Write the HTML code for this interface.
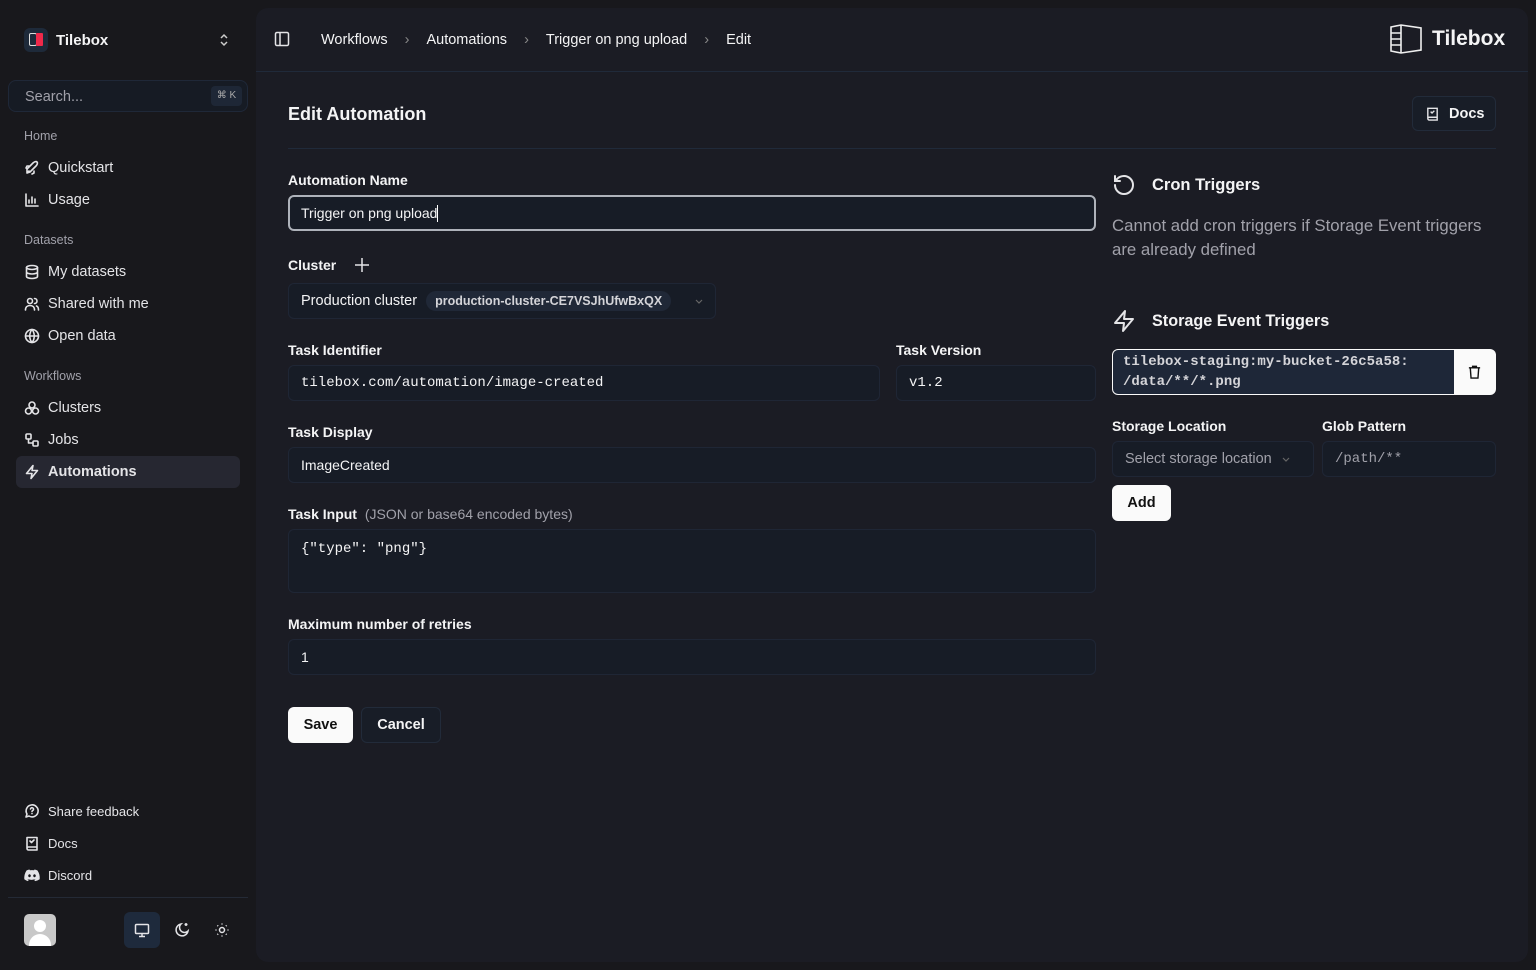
<!DOCTYPE html>
<html><head><meta charset="utf-8"><style>
*{box-sizing:border-box;margin:0;padding:0}
body{width:1536px;height:970px;background:#18181c;font-family:"Liberation Sans",sans-serif;color:#f4f4f5;position:relative;overflow:hidden;font-size:14px}
.abs{position:absolute}
.nav{position:absolute;left:24px;display:flex;align-items:center;gap:8px;font-size:14.5px;color:#e4e4e7}
.nav svg{width:16px;height:16px;stroke:#e4e4e7;fill:none;stroke-width:1.6;stroke-linecap:round;stroke-linejoin:round}
.sec{position:absolute;left:24px;font-size:12.5px;color:#a1a1aa}
.main{position:absolute;left:256px;top:8px;width:1272px;height:954px;background:#1b1c24;border-radius:12px}
.lbl{position:absolute;font-size:14px;font-weight:bold;color:#f4f4f5}
.inp{position:absolute;background:#171c26;border:1px solid #1f2635;border-radius:6px;padding-left:12px;display:flex;align-items:center;font-size:14px;color:#f4f4f5}
.mono{font-family:"Liberation Mono",monospace}
.btn{position:absolute;border-radius:6px;display:flex;align-items:center;justify-content:center;font-size:14.5px;font-weight:bold}
</style></head><body>
<div class="abs" style="left:24px;top:28px;width:24px;height:24px;background:#1e2a3a;border-radius:6px"></div>
<div class="abs" style="left:29px;top:33px;width:8px;height:13px;border:1.5px solid #ddd;border-radius:2px"></div>
<div class="abs" style="left:36px;top:33px;width:7px;height:13px;background:#f0294a;border-radius:1px"></div>
<div class="abs" style="left:56px;top:32px;font-size:15px;font-weight:bold">Tilebox</div>
<svg class="abs" style="left:216px;top:32px" width="16" height="16" viewBox="0 0 16 16" fill="none" stroke="#ccc" stroke-width="1.5"><path d="M5 6l3-3 3 3M5 10l3 3 3-3"/></svg>
<div class="abs" style="left:8px;top:80px;width:240px;height:32px;border:1px solid #1f2838;background:#161b24;border-radius:8px"></div>
<div class="abs" style="left:25px;top:89px;font-size:14.5px;color:#a1a1aa">Search...</div>
<div class="abs" style="left:211px;top:86px;width:31px;height:20px;background:#1e2736;border-radius:4px;font-size:10px;color:#aaa;text-align:center;line-height:20px">⌘ K</div>
<div class="sec" style="top:129px">Home</div>
<div class="nav" style="top:160px"><svg viewBox="0 0 16 16"><path d="M3 13l3-1 6-6c1-1 2-3 1-4-1-1-3 0-4 1L3 9zM3 13l2-2M5 6H3l-1 2M10 11v2l-2 1"/></svg>Quickstart</div>
<div class="nav" style="top:192px"><svg viewBox="0 0 16 16"><path d="M2 2v12h12M5 11V8M8 11V5M11 11V7"/></svg>Usage</div>
<div class="sec" style="top:233px">Datasets</div>
<div class="nav" style="top:264px"><svg viewBox="0 0 16 16"><ellipse cx="8" cy="3.5" rx="5.5" ry="2"/><path d="M2.5 3.5v9c0 1 2.5 2 5.5 2s5.5-1 5.5-2v-9M2.5 8c0 1 2.5 2 5.5 2s5.5-1 5.5-2"/></svg>My datasets</div>
<div class="nav" style="top:296px"><svg viewBox="0 0 16 16"><circle cx="6" cy="5" r="2.5"/><path d="M1.5 14c0-3 2-4.5 4.5-4.5s4.5 1.5 4.5 4.5M10.5 2.5a2.5 2.5 0 010 5M12.5 10c1.5.5 2 2 2 4"/></svg>Shared with me</div>
<div class="nav" style="top:328px"><svg viewBox="0 0 16 16"><circle cx="8" cy="8" r="6.5"/><path d="M1.5 8h13M8 1.5c-3 3.5-3 9.5 0 13M8 1.5c3 3.5 3 9.5 0 13"/></svg>Open data</div>
<div class="sec" style="top:369px">Workflows</div>
<div class="nav" style="top:400px"><svg viewBox="0 0 16 16"><circle cx="8" cy="5" r="3"/><circle cx="4.5" cy="11" r="3"/><circle cx="11.5" cy="11" r="3"/></svg>Clusters</div>
<div class="nav" style="top:432px"><svg viewBox="0 0 16 16"><rect x="2" y="2" width="5" height="5" rx="1"/><rect x="9" y="9" width="5" height="5" rx="1"/><path d="M4.5 7v4h4.5"/></svg>Jobs</div>
<div class="abs" style="left:16px;top:456px;width:224px;height:32px;background:#262731;border-radius:6px"></div>
<div class="nav" style="top:464px;font-weight:bold"><svg viewBox="0 0 16 16"><path d="M9 1.5L2.5 9.5H8l-1 5 6.5-8H8z"/></svg>Automations</div>
<div class="nav" style="top:803px;font-size:13px"><svg viewBox="0 0 16 16"><path d="M2 14l1-3a6 6 0 112 2z"/><path d="M6.5 6a1.5 1.5 0 113 .5c0 1-1.5 1-1.5 2M8 10.5v.1"/></svg>Share feedback</div>
<div class="nav" style="top:835px;font-size:13px"><svg viewBox="0 0 16 16"><path d="M3 13V2.5h10V12H4.5A1.5 1.5 0 003 13.5 1.5 1.5 0 004.5 15H13v-3M6 6l1.5 1.5L10 5"/></svg>Docs</div>
<div class="nav" style="top:867px;font-size:13px"><svg viewBox="0 0 16 16" style="fill:#e4e4e7;stroke:none"><path d="M13.5 3.5A12 12 0 0010.5 2.5l-.4.8a11 11 0 00-4.2 0l-.4-.8a12 12 0 00-3 1C.6 6.500 .1 9.400.3 12.200a12 12 0 003.7 1.900l.8-1.300-1.300-.6.3-.2a8.500 8.500 0 007.400 0l.3.2-1.300.6.8 1.300A12 12 0 0015.700 12.200c.3-3.300-.5-6.200-2.200-8.700zM5.500 10.300c-.7 0-1.300-.7-1.300-1.500s.6-1.500 1.300-1.500 1.300.7 1.300 1.500-.6 1.500-1.300 1.500zm5 0c-.7 0-1.300-.7-1.300-1.500s.6-1.500 1.300-1.500 1.300.7 1.300 1.500-.6 1.500-1.300 1.500z"/></svg>Discord</div>
<div class="abs" style="left:8px;top:897px;width:240px;height:1px;background:#242a36"></div>
<div class="abs" style="left:24px;top:914px;width:32px;height:32px;background:#c8c8c8;border-radius:5px;overflow:hidden"><div class="abs" style="left:10px;top:6px;width:12px;height:12px;border-radius:50%;background:#fff"></div><div class="abs" style="left:5px;top:20px;width:22px;height:16px;border-radius:11px 11px 0 0;background:#fff"></div></div>
<div class="abs" style="left:124px;top:912px;width:36px;height:36px;background:#1e2a3c;border-radius:6px"></div>
<svg class="abs" style="left:134px;top:922px" width="16" height="16" viewBox="0 0 16 16" fill="none" stroke="#e4e4e7" stroke-width="1.5"><rect x="1.5" y="2.5" width="13" height="9" rx="1"/><path d="M8 11.5v3M5 14.5h6"/></svg>
<svg class="abs" style="left:174px;top:922px" width="16" height="16" viewBox="0 0 16 16" fill="none" stroke="#e4e4e7" stroke-width="1.5"><path d="M7 2a6 6 0 107 7 4.500 4.500 0 01-7-7zM12 1v3M10.500 2.500h3"/></svg>
<svg class="abs" style="left:214px;top:922px" width="16" height="16" viewBox="0 0 16 16" fill="none" stroke="#e4e4e7" stroke-width="1.5"><circle cx="8" cy="8" r="2.5"/><path d="M8 1.5v1M8 13.5v1M1.5 8h1M13.5 8h1M3.400 3.400l.7.7M11.900 11.900l.7.7M3.400 12.600l.7-.7M11.900 4.100l.7-.7"/></svg>

<div class="main"></div>
<svg class="abs" style="left:274px;top:31px" width="16" height="16" viewBox="0 0 16 16" fill="none" stroke="#e4e4e7" stroke-width="1.5"><rect x="1.5" y="1.5" width="13" height="13" rx="1.5"/><path d="M6 1.5v13"/></svg>
<div class="abs" style="left:321px;top:32px;font-size:14.5px;color:#f4f4f5;display:flex;gap:0">
<span>Workflows</span><span style="color:#888;margin:0 17px">›</span><span>Automations</span><span style="color:#888;margin:0 17px">›</span><span>Trigger on png upload</span><span style="color:#888;margin:0 17px">›</span><span>Edit</span></div>
<svg class="abs" style="left:1389px;top:23px" width="34" height="32" viewBox="0 0 34 32" fill="none" stroke="#eee" stroke-width="1.6"><path d="M2 4l10-2 20 3v22l-20 3-10-2z"/><path d="M12 2v28M2 10h10M2 16h10M2 22h10"/></svg>
<div class="abs" style="left:1432px;top:27px;font-size:21px;font-weight:bold">Tilebox</div>
<div class="abs" style="left:256px;top:71px;width:1272px;height:1px;background:#202a3a"></div>

<div class="abs" style="left:288px;top:104px;font-size:18px;font-weight:bold">Edit Automation</div>
<div class="abs" style="left:1412px;top:96px;width:84px;height:35px;border:1px solid #222b3a;background:#181d27;border-radius:6px"></div>
<svg class="abs" style="left:1425px;top:106px" width="15" height="15" viewBox="0 0 16 16" fill="none" stroke="#e4e4e7" stroke-width="1.5"><path d="M3 13V2.5h10V12H4.5A1.5 1.5 0 003 13.5 1.5 1.5 0 004.5 15H13v-3M6 6l1.5 1.5L10 5"/></svg>
<div class="abs" style="left:1449px;top:106px;font-size:14.5px;font-weight:bold">Docs</div>
<div class="abs" style="left:288px;top:148px;width:1208px;height:1px;background:#202a3a"></div>

<div class="lbl" style="left:288px;top:172px">Automation Name</div>
<div class="inp" style="left:288px;top:195px;width:808px;height:36px;border:2px solid #aeb2ba;border-radius:6px;padding-left:11px">Trigger on png upload<span style="display:inline-block;width:1px;height:17px;background:#fff"></span></div>
<div class="lbl" style="left:288px;top:257px">Cluster</div>
<svg class="abs" style="left:354px;top:257px" width="16" height="16" viewBox="0 0 16 16" stroke="#e4e4e7" stroke-width="1.5"><path d="M8 1v14M1 8h14"/></svg>
<div class="inp" style="left:288px;top:283px;width:428px;height:36px;font-size:14.5px">Production cluster<span style="margin-left:9px;background:#202837;border-radius:10px;padding:3px 9px;font-size:12.5px;color:#d4d4d8;font-weight:bold">production-cluster-CE7VSJhUfwBxQX</span><svg style="margin-left:22px" width="12" height="12" viewBox="0 0 12 12" fill="none" stroke="#666" stroke-width="1.2"><path d="M3 5l3 3 3-3"/></svg></div>
<div class="lbl" style="left:288px;top:342px">Task Identifier</div>
<div class="inp mono" style="left:288px;top:365px;width:592px;height:36px">tilebox.com/automation/image-created</div>
<div class="lbl" style="left:896px;top:342px">Task Version</div>
<div class="inp mono" style="left:896px;top:365px;width:200px;height:36px">v1.2</div>
<div class="lbl" style="left:288px;top:424px">Task Display</div>
<div class="inp" style="left:288px;top:447px;width:808px;height:36px">ImageCreated</div>
<div class="lbl" style="left:288px;top:506px">Task Input <span style="font-weight:normal;color:#a1a1aa;margin-left:4px">(JSON or base64 encoded bytes)</span></div>
<div class="inp mono" style="left:288px;top:529px;width:808px;height:64px;align-items:flex-start;padding-top:11px">{"type": "png"}</div>
<div class="lbl" style="left:288px;top:616px">Maximum number of retries</div>
<div class="inp" style="left:288px;top:639px;width:808px;height:36px">1</div>
<div class="btn" style="left:288px;top:707px;width:65px;height:36px;background:#fafafa;color:#111">Save</div>
<div class="btn" style="left:361px;top:707px;width:80px;height:36px;border:1px solid #222b3a;background:#181d27;color:#f4f4f5">Cancel</div>

<svg class="abs" style="left:1112px;top:173px" width="24" height="24" viewBox="0 0 24 24" fill="none" stroke="#e4e4e7" stroke-width="2" stroke-linecap="round"><path d="M3 12a9 9 0 109-9 9.8 9.8 0 00-6.7 2.700L3 8M3 3v5h5"/></svg>
<div class="abs" style="left:1152px;top:176px;font-size:16.5px;font-weight:bold">Cron Triggers</div>
<div class="abs" style="left:1112px;top:214px;width:392px;font-size:16.8px;line-height:24px;color:#a1a1aa">Cannot add cron triggers if Storage Event triggers are already defined</div>
<svg class="abs" style="left:1112px;top:309px" width="24" height="24" viewBox="0 0 24 24" fill="none" stroke="#e4e4e7" stroke-width="2" stroke-linejoin="round"><path d="M13 2L3 14h9l-1 8 10-12h-9z"/></svg>
<div class="abs" style="left:1152px;top:312px;font-size:16.2px;font-weight:bold">Storage Event Triggers</div>
<div class="abs" style="left:1112px;top:349px;width:384px;height:46px;background:#fafafa;border-radius:6px"></div>
<div class="abs mono" style="left:1113px;top:350px;width:341px;height:44px;background:#1e2738;border-radius:5px 0 0 5px;padding:2px 10px;font-size:14px;line-height:20px;color:#d4d4d8;font-weight:bold">tilebox-staging:my-bucket-26c5a58:<br>/data/**/*.png</div>
<svg class="abs" style="left:1467px;top:364px" width="15" height="16" viewBox="0 0 16 16" fill="none" stroke="#111" stroke-width="1.5"><path d="M2 3.5h12M6 3.5V2h4v1.5M3.5 3.5l.8 11h7.400l.8-11"/></svg>
<div class="lbl" style="left:1112px;top:418px">Storage Location</div>
<div class="inp" style="left:1112px;top:441px;width:202px;height:36px;color:#a1a1aa;font-size:14.5px">Select storage location<svg style="margin-left:8px" width="12" height="12" viewBox="0 0 12 12" fill="none" stroke="#666" stroke-width="1.2"><path d="M3 5l3 3 3-3"/></svg></div>
<div class="lbl" style="left:1322px;top:418px">Glob Pattern</div>
<div class="inp mono" style="left:1322px;top:441px;width:174px;height:36px;color:#a1a1aa">/path/**</div>
<div class="btn" style="left:1112px;top:485px;width:59px;height:36px;background:#fafafa;color:#111">Add</div>
</body></html>
